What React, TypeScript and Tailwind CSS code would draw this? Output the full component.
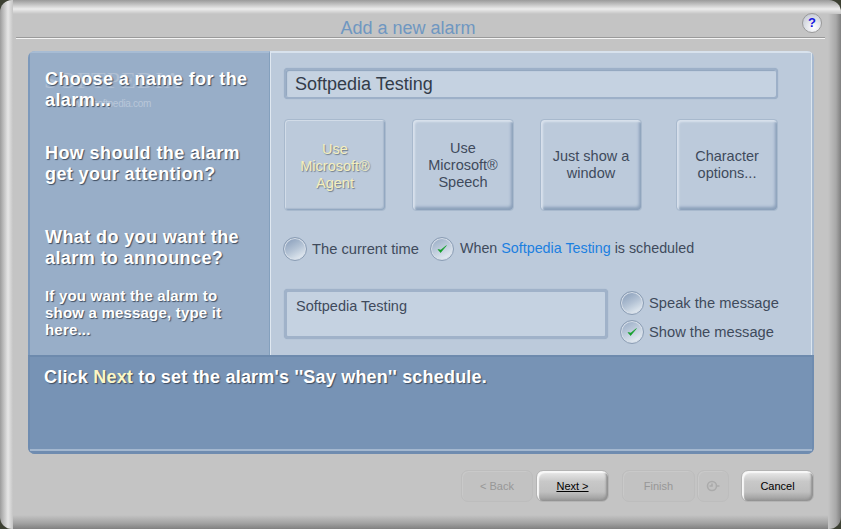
import type { ReactNode } from "react";

const headingClass =
  "font-bold text-white [text-shadow:1px_1px_1px_#3f4d60]";

function Radio({ checked = false }: { checked?: boolean }) {
  return (
    <span
      className={
        "flex size-[24px] shrink-0 items-center justify-center rounded-full border border-[#8b9db4] shadow-[inset_0_0_0_1px_#d6dee8] " +
        (checked
          ? "bg-[linear-gradient(150deg,#9aadc6_8%,#c2cfde_50%,#e8eef4_90%)]"
          : "bg-[linear-gradient(150deg,#8a9fbb_8%,#b4c3d5_50%,#e6edf3_90%)]")
      }
    >
      {checked && (
        <svg width="12" height="12" viewBox="0 0 12 12">
          <path d="M2 6.5 L4.6 9.6 L10.4 2.6 L4.8 7 Z" fill="#14a02c" stroke="#14a02c" strokeWidth="0.6" />
        </svg>
      )}
    </span>
  );
}

function OptionButton({ selected = false, className = "", children }: { selected?: boolean; className?: string; children: ReactNode }) {
  return (
    <div
      className={
        "flex h-[92px] w-[102px] items-center justify-center rounded-[4px] text-center text-[14.5px] leading-[17px] " +
        (selected
          ? "border border-[#a8b9cd] bg-[#bccadb] pt-[2px] text-[#f5efbd] shadow-[inset_1px_1px_0_#d2dce8,inset_-1px_-1px_0_#93a8c1,inset_-2px_-2px_1px_#a9bace] [text-shadow:1px_1px_1px_#6f7c88] "
          : "border border-[#a8b9cd] bg-[#bccadb] text-[#3f4a5c] shadow-[inset_2px_2px_2px_#d8e1ec,inset_-2px_-3px_3px_#8ba0ba] ") +
        className
      }
    >
      <span>{children}</span>
    </div>
  );
}

function FootButton({ disabled = false, className = "", children }: { disabled?: boolean; className?: string; children: ReactNode }) {
  return (
    <div
      className={
        "flex h-[32px] items-center justify-center rounded-[7px] text-[11px] " +
        (disabled
          ? "border border-[#bdbdbd] bg-[#c2c2c2] text-[#979797] shadow-[inset_1px_1px_0_#c9c9c9] "
          : "border border-[#b4b4b4] bg-[linear-gradient(#ececec,#c8c8c8_35%,#c0c0c0_70%,#989898)] text-black shadow-[inset_2px_2px_1px_#f8f8f8,inset_-2px_-1px_2px_#929292] ") +
        className
      }
    >
      {children}
    </div>
  );
}

export default function App() {
  return (
    <div className="h-[529px] w-[841px] overflow-hidden bg-[#3c4032] font-['Liberation_Sans',Arial,sans-serif]">
      <div className="relative h-[529px] w-[841px] rounded-[12px] bg-[#c4c4c4] bg-[linear-gradient(90deg,#9c9c9c_0px,#b9b9b9_3px,#e6e6e6_8px,#c4c4c4_13px,transparent_13px),linear-gradient(180deg,#9a9a9a_0px,#b5b5b5_3px,#ececec_9px,#c4c4c4_14px,transparent_14px),linear-gradient(270deg,#7f7f7f_0px,#a8a8a8_5px,#c4c4c4_13px,transparent_13px),linear-gradient(0deg,#808080_0px,#a3a3a3_6px,#c4c4c4_14px,transparent_14px)] px-[16px] pt-[13px]">
        {/* Title row */}
        <div className="flex h-[26px] items-start border-b border-b-[#f4f4f4] shadow-[0_-1px_0_#9a9a9a_inset]">
          <div className="flex-1 pt-[5px] pr-[2px] text-center text-[18px] leading-[21px] text-[#6f97c1]">Add a new alarm</div>
          <div className="mr-[3px] flex size-[20px] items-center justify-center rounded-full border border-[#9a9a9a] bg-[radial-gradient(circle_at_60%_75%,#ffffff,#cfd3dc_70%,#aeb2bc)] text-[13px] font-bold text-[#1616e0]">
            ?
          </div>
        </div>

        {/* Main panel */}
        <div className="mt-[12px] ml-[12px] flex h-[403px] w-[786px] flex-col overflow-hidden rounded-[7px]">
          <div className="flex h-[304px]">
            <div className="relative w-[242px] shrink-0 border-t-[2px] border-r border-l-[2px] border-t-[#a7bcd4] border-r-[#84a0bd] border-l-[#7d99bb] bg-[#98aec8] pl-[15px] text-[18px] leading-[21px]">
              <div className="absolute top-[15px] left-[14px] font-['Liberation_Serif',serif] text-[24px] leading-[24px] tracking-[1px] text-[#b0bfd2]">SOFTPEDIA</div>
              <div className="absolute top-[44px] left-[40px] text-[10px] leading-[14px] tracking-[-0.3px] text-[#b8c7d9]">www.softpedia.com</div>
              <div className={"relative mt-[16px] tracking-[0.4px] " + headingClass}>
                Choose a name for the
                <br />
                alarm...
              </div>
              <div className={"mt-[32px] tracking-[0.4px] " + headingClass}>
                How should the alarm
                <br />
                get your attention?
              </div>
              <div className={"mt-[42px] tracking-[0.4px] " + headingClass}>
                What do you want the
                <br />
                alarm to announce?
              </div>
              <div className={"mt-[18px] text-[15px] leading-[17px] tracking-[0.2px] " + headingClass}>
                If you want the alarm to
                <br />
                show a message, type it
                <br />
                here...
              </div>
            </div>

            <div className="flex-1 border-t-[2px] border-r-[2px] border-l border-t-[#d8e2ed] border-r-[#a8bad0] border-l-[#e0e8f1] bg-[#bccadb] pt-[15px] pl-[13px] shadow-[inset_-1px_0_0_#dce6f0]">
              <div className="flex h-[31px] w-[494px] items-center rounded-[4px] border-[2px] border-[#9db0c8] bg-[#c5d2e1] pt-[1px] pl-[9px] text-[18px] text-[#333c4a] shadow-[inset_1px_1px_1px_#8ea3bd,0_0_1px_#8ea3bd]">
                Softpedia Testing
              </div>

              <div className="mt-[20px] flex">
                <OptionButton selected>
                  Use
                  <br />
                  Microsoft®
                  <br />
                  Agent
                </OptionButton>
                <OptionButton className="ml-[26px]">
                  Use
                  <br />
                  Microsoft®
                  <br />
                  Speech
                </OptionButton>
                <OptionButton className="ml-[26px]">
                  Just show a
                  <br />
                  window
                </OptionButton>
                <OptionButton className="ml-[34px]">
                  Character
                  <br />
                  options...
                </OptionButton>
              </div>

              <div className="mt-[26px] -ml-[1px] flex items-center text-[#3f4a5c]">
                <Radio />
                <span className="ml-[5px] text-[14.7px]">The current time</span>
                <span className="ml-[11px]">
                  <Radio checked />
                </span>
                <span className="ml-[6px] text-[14.3px]">
                  When <span className="text-[#1b7fe0]">Softpedia Testing</span> is scheduled
                </span>
              </div>

              <div className="mt-[28px] flex">
                <div className="h-[50px] w-[324px] rounded-[4px] border-[3px] border-[#a0b2c9] bg-[#c5d2e1] pt-[6px] pl-[9px] text-[14.5px] leading-[17px] text-[#3f4a5c] shadow-[0_0_1px_#8ea3bd]">
                  Softpedia Testing
                </div>
                <div className="mt-[2px] ml-[12px] flex flex-col gap-[5px] text-[14.7px] text-[#3f4a5c]">
                  <div className="flex items-center">
                    <Radio />
                    <span className="ml-[5px]">Speak the message</span>
                  </div>
                  <div className="flex items-center">
                    <Radio checked />
                    <span className="ml-[5px]">Show the message</span>
                  </div>
                </div>
              </div>
            </div>
          </div>

          <div className="flex-1 border-x-[2px] border-t-[2px] border-b-[3px] border-x-[#6f8cb0] border-t-[#6d8aad] border-b-[#6f8cb0] bg-[#7793b5] pt-[10px] pl-[14px] text-[18px] leading-[21px] tracking-[0.2px] shadow-[inset_0_-2px_0_#a3b7cf]">
            <div className={headingClass}>
              Click <span className="text-[#fbf7c6]">Next</span> to set the alarm's ''Say when'' schedule.
            </div>
          </div>
        </div>

        {/* Wizard buttons */}
        <div className="mt-[16px] ml-[445px] flex">
          <FootButton disabled className="w-[72px]">&lt; Back</FootButton>
          <FootButton className="ml-[3px] w-[73px]">
            <span className="underline">Next &gt;</span>
          </FootButton>
          <FootButton disabled className="ml-[13px] w-[73px]">Finish</FootButton>
          <FootButton disabled className="ml-[2px] w-[32px]">
            <svg width="14" height="12" viewBox="0 0 14 12" fill="none" stroke="#ababab" strokeWidth="1.6">
              <circle cx="6" cy="6" r="4.5" />
              <path d="M6 3.5V6H3.5M10.5 6H13.5" />
            </svg>
          </FootButton>
          <FootButton className="ml-[12px] w-[73px]">Cancel</FootButton>
        </div>
      </div>
    </div>
  );
}
